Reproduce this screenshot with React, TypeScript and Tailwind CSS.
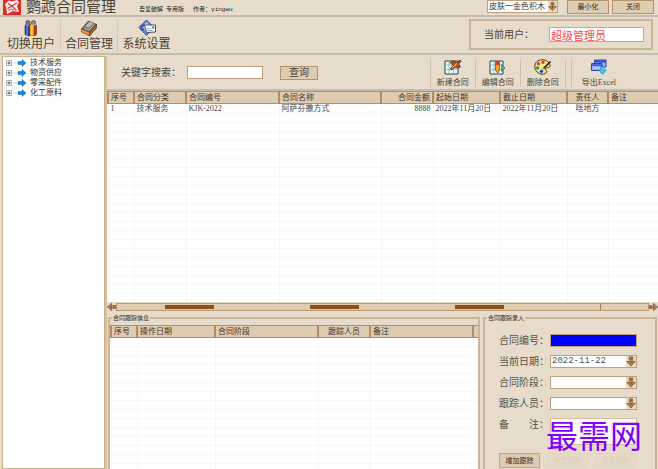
import React, { useState } from 'react';

const treeItems = ['技术服务', '物资供应', '零采配件', '化工原料'];

const contractColumns = [
  { title: '序号', width: 'w-[26px]', align: 'text-left' },
  { title: '合同分类', width: 'w-[52px]', align: 'text-left' },
  { title: '合同编号', width: 'w-[93px]', align: 'text-left' },
  { title: '合同名称', width: 'w-[102px]', align: 'text-left' },
  { title: '合同金额', width: 'w-[52px]', align: 'text-right' },
  { title: '起始日期', width: 'w-[67px]', align: 'text-left' },
  { title: '截止日期', width: 'w-[67px]', align: 'text-left' },
  { title: '责任人', width: 'w-[41px]', align: 'text-center' },
  { title: '备注', width: '', align: 'text-left' },
];

const contracts = [
  ['1', '技术服务', 'KJK-2022', '阿萨芬撒方式', '8888', '2022年11月20日', '2022年11月20日', '啥地方', ''],
];

const trackColumns = [
  { title: '序号', width: 'w-[26px]', align: 'text-left' },
  { title: '操作日期', width: 'w-[78px]', align: 'text-left' },
  { title: '合同阶段', width: 'w-[103px]', align: 'text-left' },
  { title: '跟踪人员', width: 'w-[52px]', align: 'text-center' },
  { title: '备注', width: '', align: 'text-left' },
  { title: '', width: 'w-[4px]', align: 'text-left' },
];

type Column = { title: string; width: string; align: string };

function DataGrid({ columns, rows, blankRows }: { columns: Column[]; rows: string[][]; blankRows: number }) {
  const blanks = Array.from({ length: blankRows }, () => columns.map(() => ''));
  return (
    <table className="w-full table-fixed border-collapse text-[8px] leading-[9px] text-[#444]">
      <thead>
        <tr className="h-3 border-y border-[#b08d6c] bg-[#decbb0]">
          {columns.map((column, i) => (
            <th
              key={i}
              className={`overflow-hidden whitespace-nowrap border-l-2 border-[#b58a62] px-[2px] py-0 font-normal text-[#3f352b] ${column.width} ${column.align}`}
            >
              {column.title}
            </th>
          ))}
        </tr>
      </thead>
      <tbody>
        {[...rows, ...blanks].map((row, r) => (
          <tr key={r} className="h-[9px] border-b border-[#f7f7f7]">
            {row.map((cell, i) => (
              <td key={i} className={`whitespace-nowrap border-l border-[#f7f7f7] px-[2px] py-0 ${columns[i].align}`}>
                {cell}
              </td>
            ))}
          </tr>
        ))}
      </tbody>
    </table>
  );
}

function ArrowGlyph({ className }: { className: string }) {
  return (
    <svg viewBox="0 0 12 12" className={className}>
      <path d="M4 .5h4V6h3L6 11.5 1 6h3z" fill="#b1865b" stroke="#845836" strokeWidth="1" />
      <path d="M6 2v6" stroke="#65401f" strokeWidth="1.2" />
      <path d="M2 4.500h8" stroke="#d9bd95" strokeWidth=".8" />
    </svg>
  );
}

function UsersIcon() {
  return (
    <svg viewBox="0 0 18 18" className="h-[18px] w-[18px]">
      <path d="M3 6.500 5 5h3.500v11.500L7 17l-4-1.500z" fill="#2a3c98" stroke="#1b2460" strokeWidth=".6" />
      <path d="M5 6v10" stroke="#8d9ce0" strokeWidth="1.200" />
      <path d="M8 6h4.500v11L8 16z" fill="#ffc421" stroke="#a8700f" strokeWidth=".5" />
      <path d="M12 6.500 14.500 6v9.500L12 17z" fill="#c92f1f" stroke="#7b2015" strokeWidth=".6" />
      <circle cx="6" cy="3.600" r="2.100" fill="#8a7b76" stroke="#3f3a3c" strokeWidth=".7" />
      <circle cx="11.500" cy="3.600" r="2.100" fill="#9c8c80" stroke="#3f3a3c" strokeWidth=".7" />
      <path d="M4.500 6h3M10 6h3" stroke="#d9cbbd" strokeWidth=".9" />
    </svg>
  );
}

function BookIcon() {
  return (
    <svg viewBox="0 0 18 18" className="h-[18px] w-[18px]">
      <path d="m1.500 10 7-8 8 3.500-7 8z" fill="#6e6a68" stroke="#3f3a38" strokeWidth=".8" />
      <path d="m5 7.500 4.500-5 4 1.700L9 9z" fill="#b9b5b0" />
      <path d="m4 9 5 2.200 5.500-6" fill="none" stroke="#e2ddd6" strokeWidth=".8" />
      <path d="M1.500 10v3l8 4v-3.500z" fill="#e49a55" stroke="#7a4316" strokeWidth=".7" />
      <path d="m9.500 13.500 7-8V9l-7 8z" fill="#a9612c" stroke="#57300f" strokeWidth=".7" />
    </svg>
  );
}

function SettingsIcon() {
  return (
    <svg viewBox="0 0 18 18" className="h-[18px] w-[18px]">
      <path d="M8.500 1 16 8.500 8.500 16.500 1 8.500z" fill="#7f8be0" stroke="#3a479f" strokeWidth="1" />
      <path d="M3 6h3v5H3z" fill="#5566cc" stroke="#2f3a8d" strokeWidth=".6" />
      <path d="M8.500 3.500 13 8.500l-4.500 5L5 8.500z" fill="#c7cefa" />
      <path d="M6.500 6h11v7l-9 .5z" fill="#f8f8ff" stroke="#39406b" strokeWidth=".9" />
      <path d="M14 7.500h2.200v2H14z" fill="#2f9a50" />
      <path d="M9 9.500h3.500M9.500 11.500h5" stroke="#8893b7" strokeWidth=".8" />
    </svg>
  );
}

function SheetBase() {
  return (
    <>
      <path d="M1 2h13v13H1z" fill="#e6fbf8" stroke="#28434a" />
      <path d="M1 6h13M1 10.500h13M5 2v13M9.500 2v13" stroke="#7bb7ba" strokeWidth=".8" />
    </>
  );
}

function NewIcon() {
  return (
    <svg viewBox="0 0 18 16" className="h-4 w-[18px]">
      <SheetBase />
      <path d="M6 3.500 10 2l3 1.500L16 1l1 1.500-2.500 2.500 2 3-3 1L11 8.500 7 11l-.5-1.500 2.500-3z" fill="#b95422" stroke="#4b2417" strokeWidth=".8" />
      <path d="m8 9 5-4.500" stroke="#ffd385" />
    </svg>
  );
}

function EditIcon() {
  return (
    <svg viewBox="0 0 18 16" className="h-4 w-[18px]">
      <SheetBase />
      <path d="M6.500 2.500h4V11l-2 3-2-3z" fill="#f7a619" stroke="#7c3a16" strokeWidth=".7" />
      <path d="M6.500 2.500h4V6h-4z" fill="#df3d27" />
      <path d="M12.500 5.500 16 9l-3.500 3.500z" fill="#5fae8f" stroke="#225a57" strokeWidth=".6" />
    </svg>
  );
}

function PaletteIcon() {
  return (
    <svg viewBox="0 0 18 16" className="h-4 w-[18px]">
      <path d="M8 .8c5 0 8 3 8 6 0 2-2 2-3.500 2s-1.500 1.500 0 3-1.500 3.400-4 3.400C4 15.200.8 11.500.8 7.500S4 .8 8 .8z" fill="#f3ea78" stroke="#443316" />
      <circle cx="4.500" cy="4.800" r="1.700" fill="#e327bb" />
      <circle cx="9" cy="3.300" r="1.600" fill="#e53122" />
      <circle cx="3.600" cy="9" r="1.700" fill="#19a342" />
      <circle cx="7.500" cy="12.300" r="1.700" fill="#2345dd" />
      <path d="m9.500 9.500 7-7" stroke="#2b221d" strokeWidth="1.700" />
    </svg>
  );
}

function ExportIcon() {
  return (
    <svg viewBox="0 0 18 16" className="h-4 w-[18px]">
      <path d="M4.500 1H16v7H4.500z" fill="#9bb2f8" stroke="#2a45b5" />
      <path d="M4.500 2.500H16" stroke="#2947c8" strokeWidth="2" />
      <path d="M1.500 4.500H12v7H1.500z" fill="#8ea5f5" stroke="#2a45b5" />
      <path d="M1.500 6H12" stroke="#2f50d0" strokeWidth="1.500" />
      <path d="M3 9h7" stroke="#e3eaff" strokeWidth="1" />
      <path d="M10 8c3-1 4 0 4 3h2.500l-4 4.500-4-4.500H11c0-1 0-2-1-3z" fill="#3fc9ed" stroke="#1b89b2" strokeWidth=".6" />
    </svg>
  );
}

function ToolButton({ icon, label }: { icon: React.ReactNode; label: string }) {
  return (
    <button className="flex h-8 flex-col items-center whitespace-nowrap px-[6px] text-[8px] leading-[10px] text-[#4a4239]">
      {icon}
      <span className="mt-[3px]">{label}</span>
    </button>
  );
}

function FormRow({ id, label, children }: { id: string; label: React.ReactNode; children: React.ReactNode }) {
  return (
    <div className="flex items-start">
      <label htmlFor={id} className="flex w-[51px] shrink-0 whitespace-nowrap text-[10px] leading-[13px] text-[#5b5147]">
        {label}
      </label>
      {children}
    </div>
  );
}

function DropField({ id, options }: { id: string; options: string[] }) {
  return (
    <div className="relative h-[13px] w-[87px]">
      <select
        id={id}
        className="block h-full w-full appearance-none border border-[#c0a07c] bg-white px-px font-['Liberation_Mono',monospace] text-[9px] leading-[11px] text-[#555]"
      >
        {options.map((option) => (
          <option key={option}>{option}</option>
        ))}
      </select>
      <div className="pointer-events-none absolute inset-y-px right-px flex w-[10px] items-center justify-center bg-[#e9dac1]">
        <ArrowGlyph className="h-[11px] w-[10px]" />
      </div>
    </div>
  );
}

const windowButton = 'h-[14px] w-[42px] border border-[#b3926d] bg-[#dfcdb1] text-[7px] leading-3 text-[#332a20]';
const formButton = 'h-[15px] w-[41px] border text-[7px] leading-3';

export default function App() {
  const [keyword, setKeyword] = useState('');
  const [currentUser, setCurrentUser] = useState('超级管理员');
  const [note, setNote] = useState('');

  return (
    <div className="flex h-screen flex-col overflow-hidden bg-[#e7dccb] font-['Liberation_Serif','Noto_Sans_CJK_SC',serif] text-[#4a4239]">
      {/* Title bar */}
      <header className="flex h-[17px] shrink-0 items-start border-b-2 border-[#c3bdb1] pl-[3px] pr-1">
        <svg viewBox="0 0 18 15" className="h-[15px] w-[18px]">
          <path d="M0 0h18v15H0z" fill="#dd2a2a" />
          <path d="m2 4 4-3.500 3 1 5-1.500 2 2-2 4 2 6-6-1-6 3-.5-5z" fill="#fff3f1" />
          <path d="M5 3.500 9 6l5-3M4.500 8.500 9 6l4.500 4.500" fill="none" stroke="#dd3a3a" strokeWidth="1.400" />
          <path d="M5 10.500 8 9l3 1" fill="none" stroke="#dd3a3a" strokeWidth=".9" />
        </svg>
        <h1 className="ml-[5px] text-[15px] leading-[15px]">鹦鹉合同管理</h1>
        <p className="ml-[23px] mt-1 text-[6px] leading-[10px] text-[#222]">吾爱破解&nbsp; 专用版</p>
        <p className="ml-[9px] mt-1 text-[6px] leading-[10px] text-[#222]">
          作者：<span className="font-['Liberation_Mono',monospace]">yingwu</span>
        </p>
        <div className="ml-auto flex">
          <div className="relative mr-[9px] h-[13px] w-[71px]">
            <select aria-label="皮肤" className="block h-full w-full appearance-none border border-[#c0a07c] bg-white px-px text-[8px] leading-[11px] text-[#333]">
              <option>皮肤一金色积木</option>
            </select>
            <div className="pointer-events-none absolute inset-y-px right-px flex w-[9px] items-center bg-[#e9dac1]">
              <ArrowGlyph className="h-[11px] w-[9px]" />
            </div>
          </div>
          <button className={windowButton}>最小化</button>
          <button className={`ml-[3px] ${windowButton}`}>关闭</button>
        </div>
      </header>

      {/* Main toolbar */}
      <nav className="flex h-[38px] shrink-0 items-start border-b-2 border-[#c3bdb1] pl-[2px] pr-[5px] pt-[2px] text-[12px] leading-[14px]">
        <button className="flex h-[33px] w-[59px] flex-col items-center border-r border-[#d6c8b2]">
          <UsersIcon />
          切换用户
        </button>
        <button className="flex h-[33px] w-[57px] flex-col items-center border-r border-[#d6c8b2]">
          <BookIcon />
          合同管理
        </button>
        <button className="flex h-[33px] w-[57px] flex-col items-center">
          <SettingsIcon />
          系统设置
        </button>
        <div className="ml-auto flex h-[31px] w-[184px] items-center border-2 border-[#ccb596] pl-[13px]">
          <label htmlFor="user" className="w-[65px] text-[10px]">当前用户：</label>
          <input
            id="user"
            value={currentUser}
            onChange={(e) => setCurrentUser(e.target.value)}
            className="h-[15px] w-[95px] border border-[#b5ab9c] bg-white px-px text-[11px] leading-[13px] text-[#fb4b4b]"
          />
        </div>
      </nav>

      <div className="flex min-h-0 flex-1 pt-px">
        {/* Category tree */}
        <aside className="ml-[2px] w-[103px] shrink-0 border border-[#c9b08a] bg-white pt-px">
          <ul>
            {treeItems.map((item) => (
              <li key={item} className="flex h-[10px] items-center pl-[3px] text-[8px] leading-[10px] text-[#333]">
                <svg viewBox="0 0 20 8" className="mr-1 h-2 w-5">
                  <path d="M.5 1.500h5v5h-5z" fill="#fff" stroke="#999" strokeWidth=".8" />
                  <path d="M1.500 4h3M3 2.500v3" stroke="#333" strokeWidth=".8" />
                  <path d="M7 4h4" stroke="#bbb" strokeWidth=".6" />
                  <path d="M12 2.500h4V.5L20 4l-4 3.500v-2h-4z" fill="#1688e8" stroke="#1262b5" strokeWidth=".5" />
                </svg>
                {item}
              </li>
            ))}
          </ul>
        </aside>

        <main className="flex min-w-0 flex-1 flex-col border-l-2 border-[#d3bfa2]">
          {/* Search and contract actions */}
          <div className="flex h-[35px] shrink-0 items-center border-b-2 border-[#c3bdb1] pl-[14px] pr-9">
            <label htmlFor="keyword" className="w-[66px] whitespace-nowrap text-[10px]">关键字搜索：</label>
            <input
              id="keyword"
              value={keyword}
              onChange={(e) => setKeyword(e.target.value)}
              className="h-[13px] w-[76px] border border-[#c0a07c] bg-white px-px text-[10px]"
            />
            <button className="ml-[17px] h-[14px] w-[38px] border border-[#b3926d] bg-[#decbb0] text-[10px] leading-3">查询</button>
            <div className="ml-auto flex h-7 items-start">
              <div className="h-7 w-px bg-[#d0c0a7]" />
              <ToolButton icon={<NewIcon />} label="新建合同" />
              <div className="h-7 w-px bg-[#d0c0a7]" />
              <ToolButton icon={<EditIcon />} label="编辑合同" />
              <div className="h-7 w-px bg-[#d0c0a7]" />
              <ToolButton icon={<PaletteIcon />} label="删除合同" />
              <div className="mr-1 h-7 w-[7px] border-x border-[#d0c0a7]" />
              <ToolButton icon={<ExportIcon />} label="导出Excel" />
            </div>
          </div>

          {/* Contract list */}
          <div className="min-h-0 flex-1 overflow-hidden bg-white">
            <DataGrid columns={contractColumns} rows={contracts} blankRows={40} />
          </div>
          <div className="flex h-[9px] shrink-0 items-center">
            <ArrowGlyph className="h-[10px] w-[9px] rotate-90" />
            <div className="flex h-2 flex-1 items-center justify-between border border-[#b99873] bg-[#decbb0] pl-12">
              <div className="h-1 w-[49px] bg-[#8a5219]" />
              <div className="h-1 w-[49px] bg-[#8a5219]" />
              <div className="h-1 w-[49px] bg-[#8a5219]" />
              <div className="h-full w-12 border-l border-[#a88055]" />
            </div>
            <ArrowGlyph className="h-[10px] w-[9px] -rotate-90" />
          </div>

          {/* Tracking area */}
          <div className="flex h-[158px] shrink-0 gap-[3px] pl-px pr-px pt-[3px]">
            <fieldset className="flex min-w-0 flex-1 flex-col border-2 border-b-0 border-[#ccb596]">
              <legend className="ml-[2px] px-px text-[6px] leading-2 text-[#222]">合同跟踪信息</legend>
              <div className="mt-[3px] h-[148px] overflow-hidden bg-white">
                <DataGrid columns={trackColumns} rows={[]} blankRows={18} />
              </div>
            </fieldset>

            <fieldset className="w-[174px] border-2 border-b-0 border-[#ccb596] pl-[14px]">
              <legend className="-ml-[12px] px-px text-[6px] leading-2 text-[#222]">合同跟踪录入</legend>
              <form className="relative mt-3 flex flex-col gap-2" onSubmit={(e) => e.preventDefault()}>
                <FormRow id="code" label="合同编号：">
                  <input id="code" className="h-[13px] w-[87px] border border-[#c0a07c] bg-[#0000fb]" />
                </FormRow>
                <FormRow id="date" label="当前日期：">
                  <DropField id="date" options={['2022-11-22']} />
                </FormRow>
                <FormRow id="stage" label="合同阶段：">
                  <DropField id="stage" options={['']} />
                </FormRow>
                <FormRow id="person" label="跟踪人员：">
                  <DropField id="person" options={['']} />
                </FormRow>
                <FormRow id="note" label={<><span className="w-[30px]">备</span>注：</>}>
                  <textarea
                    id="note"
                    value={note}
                    onChange={(e) => setNote(e.target.value)}
                    className="h-[27px] w-[87px] resize-none border border-[#d3bfa2] bg-[#fbf8f3] text-[10px]"
                  />
                </FormRow>
                <div className="flex gap-[7px]">
                  <button className={`${formButton} border-[#c0a584] bg-[#decbb0] text-[#332a20]`}>增加跟踪</button>
                  <button className={`${formButton} border-[#e2d5c1] bg-[#e6dac7] text-[#dccfba]`}>修改跟踪</button>
                  <button className={`${formButton} border-[#e2d5c1] bg-[#e6dac7] text-[#dccfba]`}>删除跟踪</button>
                </div>
                {/* Site watermark */}
                <div className="pointer-events-none absolute left-[47px] top-[86px] whitespace-nowrap text-[32px] leading-[34px] text-[#7f00ff]">最需网</div>
              </form>
            </fieldset>
          </div>
        </main>
      </div>
    </div>
  );
}
